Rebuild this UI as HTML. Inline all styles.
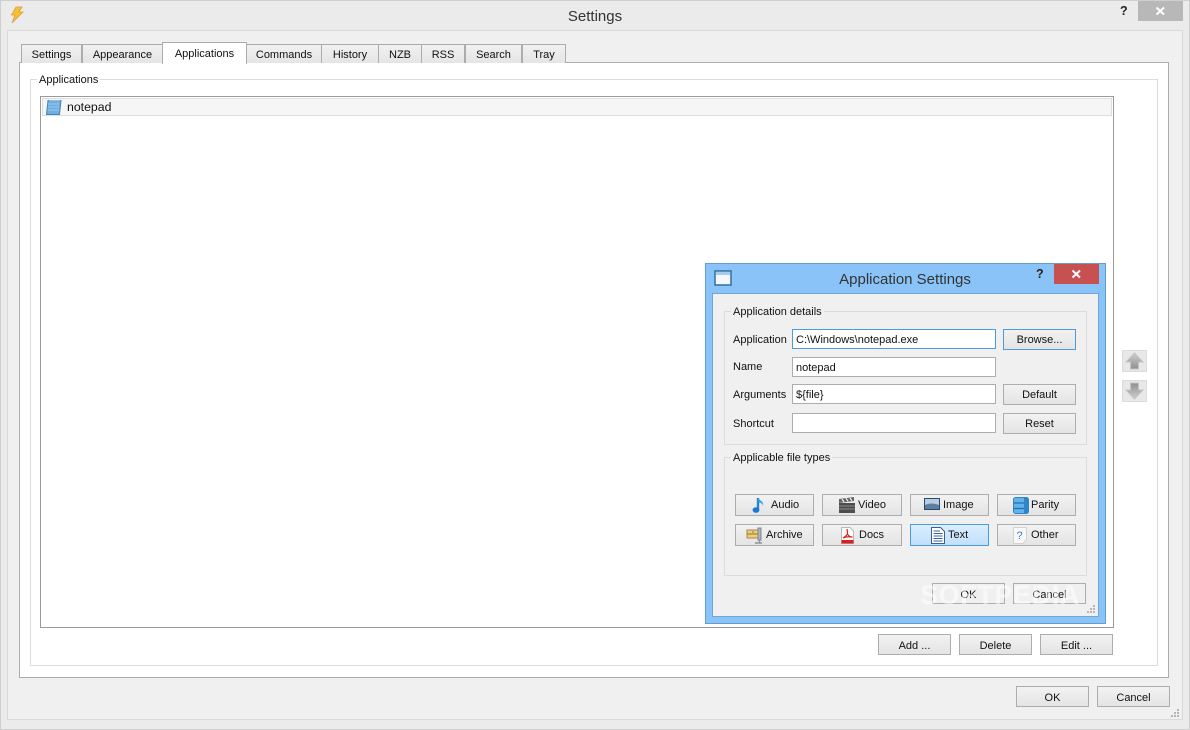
<!DOCTYPE html>
<html><head><meta charset="utf-8"><style>
html,body{margin:0;padding:0;background:#ececec;}
#w{position:relative;width:1190px;height:730px;overflow:hidden;background:#ebebeb;font:11px "Liberation Sans",sans-serif;color:#111;}
#w div,#w span.a,#w svg.a{position:absolute;box-sizing:border-box;}
.b{background:linear-gradient(#f2f2f2,#e4e4e4);border:1px solid #adadad;text-align:center;white-space:nowrap;}
.tab{background:linear-gradient(#f1f1f1,#e5e5e5);border:1px solid #acacac;border-bottom:none;top:44px;height:19px;line-height:20px;text-align:center;}
.inp{background:#fff;border:1px solid #adadad;left:792px;width:204px;height:20px;line-height:21px;padding-left:3px;}
.t{white-space:nowrap;}
.g{border:1px solid #dcdcdc;}
.lb{padding:0 2px;white-space:nowrap;height:14px;line-height:15px;}
</style></head><body><div id="w">
<div style="left:0;top:0;width:1190px;height:730px;border:1px solid #cfcfcf"></div>
<svg class="a" style="left:9px;top:6px" width="16" height="18" viewBox="0 0 16 18"><path d="M7 1L13 1L10 6L14 6L3 17L6 9L2.500 9Z" fill="#f3c234" stroke="#e59a3a" stroke-width=".8"/></svg>
<div class="t" style="left:495px;width:200px;text-align:center;top:8px;font-size:15px;line-height:17px;color:#333">Settings</div>
<div class="t" style="left:1120px;top:4px;font-weight:bold;font-size:12.500px;line-height:14px;color:#222">?</div>
<div style="left:1138px;top:1px;width:45px;height:20px;background:#b8b8b8"></div>
<svg class="a" style="left:1154px;top:5px" width="13" height="12" viewBox="0 0 13 12"><path d="M2.500 2.500L10 9.500M10 2.500L2.500 9.500" stroke="#fff" stroke-width="2"/></svg>

<div style="left:7px;top:30px;width:1176px;height:690px;background:#f0f0f0;border:1px solid #dadada"></div>

<div style="left:19px;top:62px;width:1150px;height:616px;background:#fff;border:1px solid #adadad"></div>
<div class="tab" style="left:21px;width:61px">Settings</div>
<div class="tab" style="left:82px;width:81px">Appearance</div>
<div class="tab" style="left:246px;width:76px">Commands</div>
<div class="tab" style="left:321px;width:58px">History</div>
<div class="tab" style="left:378px;width:44px">NZB</div>
<div class="tab" style="left:421px;width:44px">RSS</div>
<div class="tab" style="left:465px;width:57px">Search</div>
<div class="tab" style="left:522px;width:44px">Tray</div>
<div class="tab" style="left:162px;width:85px;top:42px;height:22px;background:#fff;line-height:22px;z-index:2">Applications</div>

<div class="g" style="left:30px;top:79px;width:1128px;height:587px"></div>
<div class="lb" style="left:37px;top:73px;background:#fff">Applications</div>
<div style="left:40px;top:96px;width:1074px;height:532px;background:#fff;border:1px solid #9a9a9a"></div>
<div style="left:42px;top:98px;width:1070px;height:18px;background:#f6f6f6;border:1px solid #dedede"></div>
<svg class="a" style="left:45px;top:99px" width="17" height="17" viewBox="0 0 17 17"><path d="M3 1.500H16L14.500 15.500H1.500Z" fill="#6eaee0" stroke="#3f86c4"/><path d="M4 1.500H15M3 5H14M3 8H14M2.500 11H14" stroke="#a8d2f2" stroke-width=".8"/></svg>
<div class="t" style="left:67px;top:99px;line-height:16px;font-size:12.300px">notepad</div>

<div class="b" style="left:878px;top:634px;width:73px;height:21px;line-height:22px">Add ...</div>
<div class="b" style="left:959px;top:634px;width:73px;height:21px;line-height:22px">Delete</div>
<div class="b" style="left:1040px;top:634px;width:73px;height:21px;line-height:22px">Edit ...</div>
<div class="b" style="left:1016px;top:686px;width:73px;height:21px;line-height:22px">OK</div>
<div class="b" style="left:1097px;top:686px;width:73px;height:21px;line-height:22px">Cancel</div>
<svg class="a" style="left:1171px;top:709px" width="9" height="9" viewBox="0 0 9 9"><path d="M6 0h2v2H6zM3 3h2v2H3zM6 3h2v2H6zM0 6h2v2H0zM3 6h2v2H3zM6 6h2v2H6z" fill="#b5b5b5"/></svg>

<div style="left:1122px;top:350px;width:25px;height:22px;background:#e8e8e8;border:1px solid #dcdcdc"></div>
<svg class="a" style="left:1122px;top:350px" width="25" height="22" viewBox="0 0 25 22"><defs><linearGradient id="ga" x1="0" y1="0" x2="0" y2="1"><stop offset="0" stop-color="#cfcfcf"/><stop offset="1" stop-color="#8f8f8f"/></linearGradient></defs><path d="M12.500 3L21 12H16.500V19H8.500V12H4Z" fill="url(#ga)" stroke="#c4c4c4"/></svg>
<div style="left:1122px;top:380px;width:25px;height:22px;background:#e8e8e8;border:1px solid #dcdcdc"></div>
<svg class="a" style="left:1122px;top:380px" width="25" height="22" viewBox="0 0 25 22"><defs><linearGradient id="gb" x1="0" y1="0" x2="0" y2="1"><stop offset="0" stop-color="#8f8f8f"/><stop offset="1" stop-color="#cfcfcf"/></linearGradient></defs><path d="M12.500 19L21 10H16.500V3H8.500V10H4Z" fill="url(#gb)" stroke="#c4c4c4"/></svg>

<div style="left:705px;top:263px;width:401px;height:361px;background:#8ac3f8;border:1px solid #5f9fd6"></div>
<svg class="a" style="left:714px;top:270px" width="18" height="16" viewBox="0 0 18 16"><rect x="1" y="1" width="16" height="14" fill="#f5f8fb" stroke="#2f6f9f" stroke-width="1.500"/><rect x="2" y="2" width="14" height="3" fill="#a7cdee"/></svg>
<div class="t" style="left:705px;width:400px;text-align:center;top:271px;font-size:15px;line-height:18px;color:#333">Application Settings</div>
<div class="t" style="left:1036px;top:267px;font-weight:bold;font-size:12.500px;line-height:14px;color:#222">?</div>
<div style="left:1054px;top:264px;width:45px;height:20px;background:#c75050"></div>
<svg class="a" style="left:1070px;top:268px" width="13" height="12" viewBox="0 0 13 12"><path d="M2.500 2.500L10 9.500M10 2.500L2.500 9.500" stroke="#fff" stroke-width="2"/></svg>
<div style="left:712px;top:293px;width:387px;height:324px;background:#f0f0f0;border:1px solid #6ea6d8"></div>

<div class="g" style="left:724px;top:311px;width:363px;height:134px"></div>
<div class="lb" style="left:731px;top:305px;background:#f0f0f0">Application details</div>
<div class="t" style="left:733px;top:333px;line-height:15px">Application</div>
<div class="t" style="left:733px;top:360px;line-height:15px">Name</div>
<div class="t" style="left:733px;top:388px;line-height:15px">Arguments</div>
<div class="t" style="left:733px;top:417px;line-height:15px">Shortcut</div>
<div class="inp" style="top:329px;border-color:#4a9be0">C:\Windows\notepad.exe</div>
<div class="inp" style="top:357px">notepad</div>
<div class="inp" style="top:384px">${file}</div>
<div class="inp" style="top:413px"></div>
<div class="b" style="left:1003px;top:329px;width:73px;height:21px;line-height:21px;border-color:#4a9be0">Browse...</div>
<div class="b" style="left:1003px;top:384px;width:73px;height:21px;line-height:21px">Default</div>
<div class="b" style="left:1003px;top:413px;width:73px;height:21px;line-height:21px">Reset</div>

<div class="g" style="left:724px;top:457px;width:363px;height:119px"></div>
<div class="lb" style="left:731px;top:451px;background:#f0f0f0">Applicable file types</div>

<div class="b" style="left:735px;top:494px;width:79px;height:22px"></div>
<div class="b" style="left:822px;top:494px;width:80px;height:22px"></div>
<div class="b" style="left:910px;top:494px;width:79px;height:22px"></div>
<div class="b" style="left:997px;top:494px;width:79px;height:22px"></div>
<div class="b" style="left:735px;top:524px;width:79px;height:22px"></div>
<div class="b" style="left:822px;top:524px;width:80px;height:22px"></div>
<div class="b" style="left:910px;top:524px;width:79px;height:22px;background:linear-gradient(#daeeff,#c2e0fb);border-color:#4a9be0"></div>
<div class="b" style="left:997px;top:524px;width:79px;height:22px"></div>
<div class="t" style="left:771px;top:498px;line-height:15px">Audio</div>
<div class="t" style="left:858px;top:498px;line-height:15px">Video</div>
<div class="t" style="left:943px;top:498px;line-height:15px">Image</div>
<div class="t" style="left:1031px;top:498px;line-height:15px">Parity</div>
<div class="t" style="left:766px;top:528px;line-height:15px">Archive</div>
<div class="t" style="left:859px;top:528px;line-height:15px">Docs</div>
<div class="t" style="left:948px;top:528px;line-height:15px">Text</div>
<div class="t" style="left:1031px;top:528px;line-height:15px">Other</div>

<svg class="a" style="left:752px;top:497px" width="14" height="17" viewBox="0 0 14 17"><path d="M6 1V12.500" stroke="#1f86d8" stroke-width="2.400"/><path d="M6 1C8 4 12 4 11 9C10.500 6.500 9 6 7 5.500Z" fill="#39a5ea"/><ellipse cx="4" cy="13" rx="3.400" ry="2.800" fill="#1a78d2"/></svg>
<svg class="a" style="left:838px;top:496px" width="18" height="18" viewBox="0 0 18 18"><rect x="1" y="7" width="16" height="10" fill="#4d4d4d"/><path d="M1 10H17M1 13H17" stroke="#8a8a8a"/><path d="M1 3L16 1V5L1 7Z" fill="#666"/><path d="M4 3L6 6M8 2L10 5.500M12 2L14 5" stroke="#eee" stroke-width="1.200"/></svg>
<svg class="a" style="left:924px;top:498px" width="16" height="13" viewBox="0 0 16 13"><rect x=".5" y=".5" width="15" height="11" fill="#b7cee2" stroke="#264a68"/><path d="M1 7C5 5 10 5 15 7V11H1Z" fill="#5c7f9f"/></svg>
<svg class="a" style="left:1013px;top:497px" width="16" height="17" viewBox="0 0 16 17"><rect x=".5" y=".5" width="15" height="16" rx="2" fill="#62b2ea" stroke="#2e86c8"/><path d="M1 6H15M1 11.500H15" stroke="#1d6fb2" stroke-width="1.200"/><rect x="11" y="1" width="4" height="15" fill="#2e86c8"/></svg>
<svg class="a" style="left:746px;top:527px" width="17" height="17" viewBox="0 0 17 17"><rect x="1" y="3" width="11" height="8" fill="#f0cd7e" stroke="#a8864a"/><path d="M1 7H12M6 5H8" stroke="#8f7235"/><rect x="12" y="1" width="3" height="12" fill="#b0b4bb" stroke="#7e8590"/><path d="M13.500 13V16M9 16H16" stroke="#8d949e" stroke-width="1.500"/></svg>
<svg class="a" style="left:840px;top:527px" width="15" height="17" viewBox="0 0 15 17"><path d="M1.500 .5H10L13.500 4V16.500H1.500Z" fill="#fff" stroke="#b9b9b9"/><path d="M7 2C8 7 8 8 3 11M7.500 7C9 9.500 10 10 12.500 10M3 11C6 9.500 9 9.500 12 10" fill="none" stroke="#d81f1f" stroke-width="1.200"/><rect x="1.500" y="13" width="12" height="3.500" fill="#d81f1f"/></svg>
<svg class="a" style="left:931px;top:527px" width="14" height="17" viewBox="0 0 14 17"><path d="M.5 .5H9.500L13.500 4.500V16.500H.5Z" fill="#fff" stroke="#3f5f86"/><path d="M2.500 4H9M2.500 6.500H11.500M2.500 9H11.500M2.500 11.500H11.500M2.500 14H11.500" stroke="#3a5fa0"/></svg>
<svg class="a" style="left:1013px;top:527px" width="14" height="17" viewBox="0 0 14 17"><path d="M.5 .5H13.500V12L10 16.500H.5Z" fill="#f8f8f8" stroke="#d2d2d2"/><text x="3.500" y="12" font-size="11" fill="#3f7fc4" font-family="Liberation Sans">?</text></svg>

<div class="b" style="left:932px;top:583px;width:73px;height:21px;line-height:22px;background:#f0f0f0">OK</div>
<div class="b" style="left:1013px;top:583px;width:73px;height:21px;line-height:22px;background:#f0f0f0">Cancel</div>
<div class="t" style="left:920px;top:578px;font-size:27px;line-height:34px;font-weight:bold;color:rgba(255,255,255,.5);letter-spacing:.6px">SOFTPEDIA</div>
<svg class="a" style="left:1087px;top:605px" width="9" height="9" viewBox="0 0 9 9"><path d="M6 0h2v2H6zM3 3h2v2H3zM6 3h2v2H6zM0 6h2v2H0zM3 6h2v2H3zM6 6h2v2H6z" fill="#b5b5b5"/></svg>
</div></body></html>
